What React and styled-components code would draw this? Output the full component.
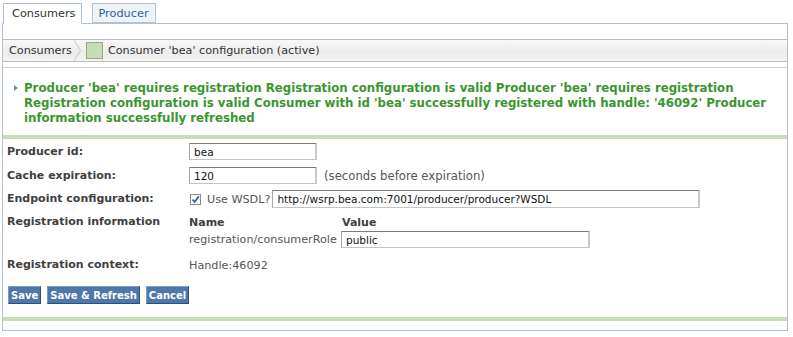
import React from 'react'
import styled, { createGlobalStyle } from 'styled-components'

const GlobalStyle = createGlobalStyle`
  html, body { margin: 0; padding: 0; background: #fff; }
  body { font-family: "DejaVu Sans", Verdana, sans-serif; color: #333; }
`

const Page = styled.div`
  padding: 3px 5px 0 2px;
  width: 786px;
`

const Tabs = styled.div`
  display: flex;
  gap: 10px;
  padding-left: 1px;
  height: 20px;
  position: relative;
  z-index: 1;
`

const Tab = styled.div`
  box-sizing: border-box;
  height: ${(p) => (p.$active ? '21px' : '20px')};
  padding: ${(p) => (p.$active ? '0 5px 0 8px' : '0 6px')};
  display: flex;
  align-items: center;
  font-size: 11.3px;
  border: 1px solid #b3c1cf;
  border-bottom: ${(p) => (p.$active ? '1px solid #fff' : '1px solid #b3c1cf')};
  background: ${(p) => (p.$active ? '#fff' : '#eef3f8')};
  color: ${(p) => (p.$active ? '#333' : '#2d62a6')};
`

const Panel = styled.div`
  border: 1px solid #b3c1cf;
  padding-top: 15px;
  height: 308px;
  box-sizing: border-box;
  display: flex;
  flex-direction: column;
`

const Crumbs = styled.div`
  height: 23px;
  box-sizing: border-box;
  border-top: 1px solid #bdbdbd;
  border-bottom: 1px solid #bdbdbd;
  background: linear-gradient(#f8f8f8, #ececec 60%, #f3f3f3);
  display: flex;
  align-items: center;
  font-size: 11.2px;
  color: #333;
`

const CrumbLink = styled.span`
  padding-left: 6px;
`

const Chevron = styled.svg`
  width: 9px;
  height: 21px;
  margin: 0 4px 0 1px;
`

const Swatch = styled.span`
  width: 15px;
  height: 15px;
  background: #c8dcb6;
  border: 1px solid #9aa592;
  margin-right: 5px;
`

const Message = styled.div`
  margin-top: 5px;
  border-top: 1px solid #d4d4d4;
  border-bottom: 4px solid #c8dcb6;
  padding: 13px 12px 9px 11px;
  display: flex;
  gap: 6px;
`

const Bullet = styled.svg`
  width: 4px;
  height: 6px;
  margin-top: 4px;
  flex-shrink: 0;
`

const MsgText = styled.div`
  font-size: 11.75px;
  font-weight: bold;
  line-height: 15px;
  color: #3a962e;
`

const Form = styled.div`
  padding: 4px 0 0 4px;
  flex: 1;
`

const Row = styled.div`
  display: flex;
  align-items: ${(p) => (p.$top ? 'flex-start' : 'center')};
  min-height: ${(p) => p.$h}px;
  margin-bottom: ${(p) => p.$mb}px;
`

const Label = styled.div`
  width: 182px;
  flex-shrink: 0;
  font-size: 11px;
  font-weight: bold;
  color: #404040;
  line-height: 16px;
`

const Field = styled.input`
  box-sizing: border-box;
  width: ${(p) => p.$w}px;
  height: ${(p) => p.$h || 17}px;
  margin: 0 0 0 ${(p) => p.$ml || 0}px;
  padding: 0 4px;
  font-family: "DejaVu Sans", Verdana, sans-serif;
  font-size: 10.5px;
  color: #111;
  border: 1px solid #c4c4c4;
  border-top-color: #7c7c7c;
  border-left-color: #a6a6a6;
  border-right: 2px solid #c8c8c8;
  background: #fff;
  outline: none;
`

const Note = styled.span`
  font-size: ${(p) => p.$fs || 11}px;
  color: #555;
  margin-left: ${(p) => p.$ml || 0}px;
`

const Check = styled.svg`
  width: 11px;
  height: 11px;
  margin: 0 6px 0 1px;
`

const SubTable = styled.div`
  display: grid;
  grid-template-columns: 152px auto;
  grid-template-rows: 16px 17px;
  row-gap: 1px;
  align-items: center;
`

const SubHead = styled.div`
  font-size: 11px;
  font-weight: bold;
  color: #404040;
  padding-left: ${(p) => p.$pl || 0}px;
`

const Value = styled.div`
  font-size: 11.2px;
  color: #555;
`

const Buttons = styled.div`
  display: flex;
  gap: 6px;
  padding-left: 1px;
`

const Button = styled.button`
  height: 18px;
  padding: 0 2px;
  margin: 0;
  font-family: "DejaVu Sans", Verdana, sans-serif;
  font-size: 10px;
  font-weight: bold;
  color: #fff;
  background: #4f77ab;
  border: 1px solid #2f4e78;
  border-top-color: #7d9cc4;
  border-left-color: #7d9cc4;
`

const Footer = styled.div`
  border-top: 4px solid #c8dcb6;
  height: 9px;
`

const App = () => {
  return (
    <Page>
      <GlobalStyle />
      <Tabs>
        <Tab $active>Consumers</Tab>
        <Tab>Producer</Tab>
      </Tabs>
      <Panel>
        <Crumbs>
          <CrumbLink>Consumers</CrumbLink>
          <Chevron viewBox="0 0 9 21">
            <polyline points="1,0 7.5,10.5 1,21" fill="none" stroke="#c9c9c9" strokeWidth="1" />
          </Chevron>
          <Swatch />
          <span>Consumer 'bea' configuration (active)</span>
        </Crumbs>
        <Message>
          <Bullet viewBox="0 0 4 6">
            <polygon points="0,0 4,3 0,6" fill="#6b8db5" />
          </Bullet>
          <MsgText>
            Producer 'bea' requires registration Registration configuration is valid Producer 'bea' requires registration
            Registration configuration is valid Consumer with id 'bea' successfully registered with handle: '46092' Producer
            information successfully refreshed
          </MsgText>
        </Message>
        <Form>
          <Row $h={17} $mb={7}>
            <Label>Producer id:</Label>
            <Field $w={128} defaultValue="bea" />
          </Row>
          <Row $h={17} $mb={6}>
            <Label>Cache expiration:</Label>
            <Field $w={128} defaultValue="120" />
            <Note $ml={7} $fs={11.7}>(seconds before expiration)</Note>
          </Row>
          <Row $h={18} $mb={6}>
            <Label>Endpoint configuration:</Label>
            <Check viewBox="0 0 11 11">
              <rect x="0.5" y="0.5" width="10" height="10" fill="#fff" stroke="#8a8a8a" />
              <path d="M2.5 5.5 L4.6 8 L8.8 2.2" fill="none" stroke="#2a64b8" strokeWidth="1.8" />
            </Check>
            <Note $fs={11.2}>Use WSDL?</Note>
            <Field $w={428} $h={18} $ml={2} defaultValue="http://wsrp.bea.com:7001/producer/producer?WSDL" />
          </Row>
          <Row $h={34} $mb={9} $top>
            <Label>Registration information</Label>
            <SubTable>
              <SubHead>Name</SubHead>
              <SubHead $pl={1}>Value</SubHead>
              <Value>registration/consumerRole</Value>
              <Field $w={249} defaultValue="public" />
            </SubTable>
          </Row>
          <Row $h={16} $mb={13}>
            <Label>Registration context:</Label>
            <Value>Handle:46092</Value>
          </Row>
          <Buttons>
            <Button>Save</Button>
            <Button>Save &amp; Refresh</Button>
            <Button>Cancel</Button>
          </Buttons>
        </Form>
        <Footer />
      </Panel>
    </Page>
  )
}

export default App
